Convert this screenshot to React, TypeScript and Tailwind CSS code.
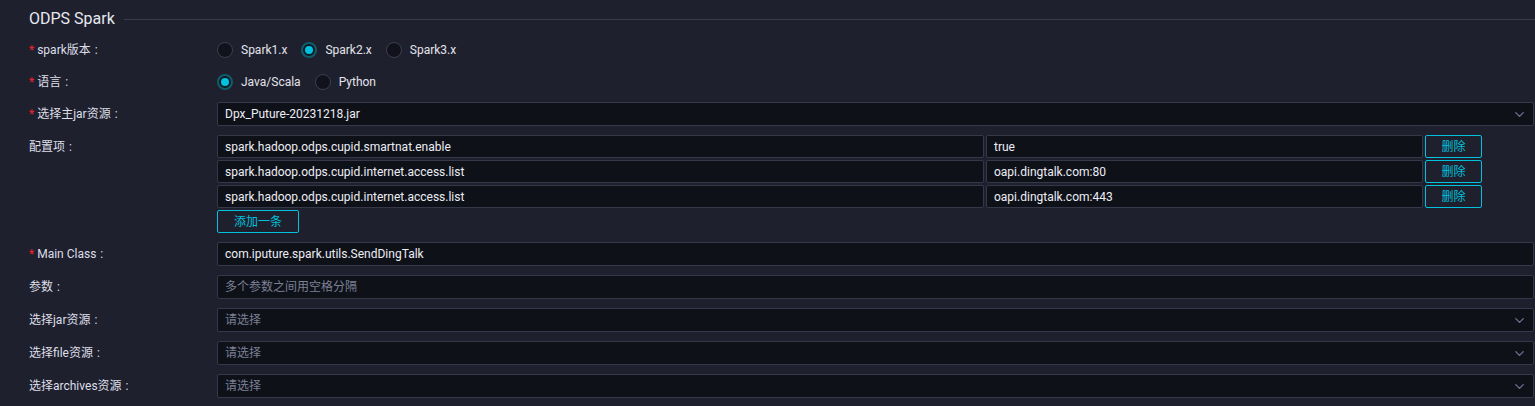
import { ChevronDown } from "lucide-react";

const Star = () => <span className="mr-[3px] text-[#f5222d]">*</span>;

const Label = ({ text, required }: { text: string; required?: boolean }) => (
  <div className="w-[188px] shrink-0 leading-[24px] text-[#dcdee8]">
    {required && <Star />}
    {text}
    <span className="ml-[4px]">:</span>
  </div>
);

const Radio = ({ label, checked }: { label: string; checked?: boolean }) => (
  <label className="flex items-center gap-[8px] mr-[14px]">
    {checked ? (
      <span className="flex h-[16px] w-[16px] items-center justify-center rounded-full border-2 border-[#0f5d6b] bg-[#0d1a24]">
        <span className="h-[8px] w-[8px] rounded-full bg-[#00c1de]" />
      </span>
    ) : (
      <span className="h-[16px] w-[16px] rounded-full border border-[#3d3f52] bg-[#11121b]" />
    )}
    <span className="text-[#e2e4ec]">{label}</span>
  </label>
);

const Input = ({ value, placeholder, className = "" }: { value?: string; placeholder?: string; className?: string }) => (
  <div
    className={`flex h-[24px] items-center rounded-[2px] border border-[#363849] bg-[#0f1119] px-[7px] ${className}`}
  >
    {value ? <span className="text-[#eceef4]">{value}</span> : <span className="text-[#7b8096]">{placeholder}</span>}
  </div>
);

const Select = ({ value, placeholder }: { value?: string; placeholder?: string }) => (
  <div className="flex h-[24px] flex-1 items-center justify-between rounded-[2px] border border-[#363849] bg-[#0f1119] pl-[7px] pr-[6px]">
    {value ? <span className="text-[#eceef4]">{value}</span> : <span className="text-[#7b8096]">{placeholder}</span>}
    <ChevronDown className="h-[15px] w-[15px] text-[#6c7190]" strokeWidth={2.2} />
  </div>
);

const configs = [
  { key: "spark.hadoop.odps.cupid.smartnat.enable", value: "true" },
  { key: "spark.hadoop.odps.cupid.internet.access.list", value: "oapi.dingtalk.com:80" },
  { key: "spark.hadoop.odps.cupid.internet.access.list", value: "oapi.dingtalk.com:443" },
];

export default function App() {
  return (
    <div className="min-h-screen bg-[#1f202d] pt-[8px] pl-[29px] font-['Roboto','Noto_Sans_CJK_SC',sans-serif] text-[12px]">
      {/* section title */}
      <div className="flex h-[22px] items-center gap-[9px]">
        <span className="text-[16px] text-[#e6e8f0]">ODPS Spark</span>
        <div className="h-px flex-1 bg-[#3a3c4d]" />
      </div>

      <div className="pr-px">
        <div className="mt-[8px] flex h-[24px] items-center">
          <Label text="spark版本" required />
          <div className="flex items-center">
            <Radio label="Spark1.x" />
            <Radio label="Spark2.x" checked />
            <Radio label="Spark3.x" />
          </div>
        </div>

        <div className="mt-[8px] flex h-[24px] items-center">
          <Label text="语言" required />
          <div className="flex items-center">
            <Radio label="Java/Scala" checked />
            <Radio label="Python" />
          </div>
        </div>

        <div className="mt-[8px] flex">
          <Label text="选择主jar资源" required />
          <Select value="Dpx_Puture-20231218.jar" />
        </div>

        <div className="mt-[9px] flex">
          <Label text="配置项" />
          <div className="flex flex-col gap-[2px]">
            {configs.map((c, i) => (
              <div key={i} className="flex items-center">
                <Input value={c.key} className="!h-[23px] w-[767px]" />
                <Input value={c.value} className="!h-[23px] ml-[2px] w-[437px]" />
                <button className="ml-[2px] h-[23px] w-[57px] rounded-[2px] border border-[#00c1de] text-[#00c1de]">
                  删除
                </button>
              </div>
            ))}
            <button className="h-[23px] w-[82px] rounded-[2px] border border-[#00c1de] text-[#00c1de]">添加一条</button>
          </div>
        </div>

        <div className="mt-[9px] flex">
          <Label text="Main Class" required />
          <Input value="com.iputure.spark.utils.SendDingTalk" className="flex-1" />
        </div>

        <div className="mt-[9px] flex">
          <Label text="参数" />
          <Input placeholder="多个参数之间用空格分隔" className="flex-1" />
        </div>

        <div className="mt-[9px] flex">
          <Label text="选择jar资源" />
          <Select placeholder="请选择" />
        </div>

        <div className="mt-[9px] flex">
          <Label text="选择file资源" />
          <Select placeholder="请选择" />
        </div>

        <div className="mt-[9px] flex">
          <Label text="选择archives资源" />
          <Select placeholder="请选择" />
        </div>
      </div>
    </div>
  );
}
